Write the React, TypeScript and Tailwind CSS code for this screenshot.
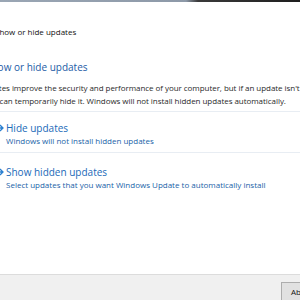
function Arrow() {
  return (
    <svg width="10" height="14" viewBox="0 0 10 14" className="ml-[-5px] mr-[1px] shrink-0">
      <path d="M1 7 H8 M5 4 L8 7 L5 10" stroke="#2a7fd0" strokeWidth="1.3" fill="none" />
    </svg>
  );
}

export default function App() {
  const font = { fontFamily: '"Open Sans", "Noto Sans", "Liberation Sans", sans-serif' };
  return (
    <div className="relative w-[300px] h-[300px] overflow-hidden bg-white flex flex-col" style={font}>
      <div className="h-[2px] w-full bg-[linear-gradient(to_right,#9aa6b4_0%,#8d99a8_62%,#3a3a3a_66%,#1e1e1e_100%)] shrink-0" />
      <div className="ml-[-5px] mt-[23px] h-[14px] text-[8px] leading-[14px] text-[#111] whitespace-nowrap">Show or hide updates</div>
      <div className="ml-[-14px] mt-[20px] h-[16px] text-[10px] leading-[16px] text-[#1d5ba6] whitespace-nowrap">Show or hide updates</div>
      <div className="mt-[6px] text-[8px] leading-[13px] text-[#2a2a2a] whitespace-nowrap tracking-[-0.05px]">
        <div className="ml-[-21px]">Updates improve the security and performance of your computer, but if an update isn't working,</div>
        <div className="ml-[-16px]">you can temporarily hide it. Windows will not install hidden updates automatically.</div>
      </div>
      <div className="mt-[4px] h-px w-full bg-[#e8edf3] shrink-0" />
      <div className="flex items-start mt-[9px]">
        <Arrow />
        <div className="whitespace-nowrap">
          <div className="text-[10px] leading-[14px] text-[#1a6ab8]">Hide updates</div>
          <div className="text-[8px] leading-[12px] text-[#1a5fa8]">Windows will not install hidden updates</div>
        </div>
      </div>
      <div className="mt-[5px] h-px w-full bg-[#e8edf3] shrink-0" />
      <div className="flex items-start mt-[12px]">
        <Arrow />
        <div className="whitespace-nowrap">
          <div className="text-[10px] leading-[14px] text-[#1a6ab8]">Show hidden updates</div>
          <div className="text-[8px] leading-[12px] text-[#1a5fa8]">Select updates that you want Windows Update to automatically install</div>
        </div>
      </div>
      <div className="flex-1" />
      <div className="h-[26px] shrink-0 border-t border-[#dcdcdc] bg-[#f0f0f0] flex justify-end items-start pt-[7px]">
        <div className="mr-[-20px] w-[39px] h-[20px] border border-[#adadad] bg-[#e1e1e1] text-[8px] leading-[18px] pl-[9px] text-[#111] whitespace-nowrap">Abort</div>
      </div>
    </div>
  );
}
